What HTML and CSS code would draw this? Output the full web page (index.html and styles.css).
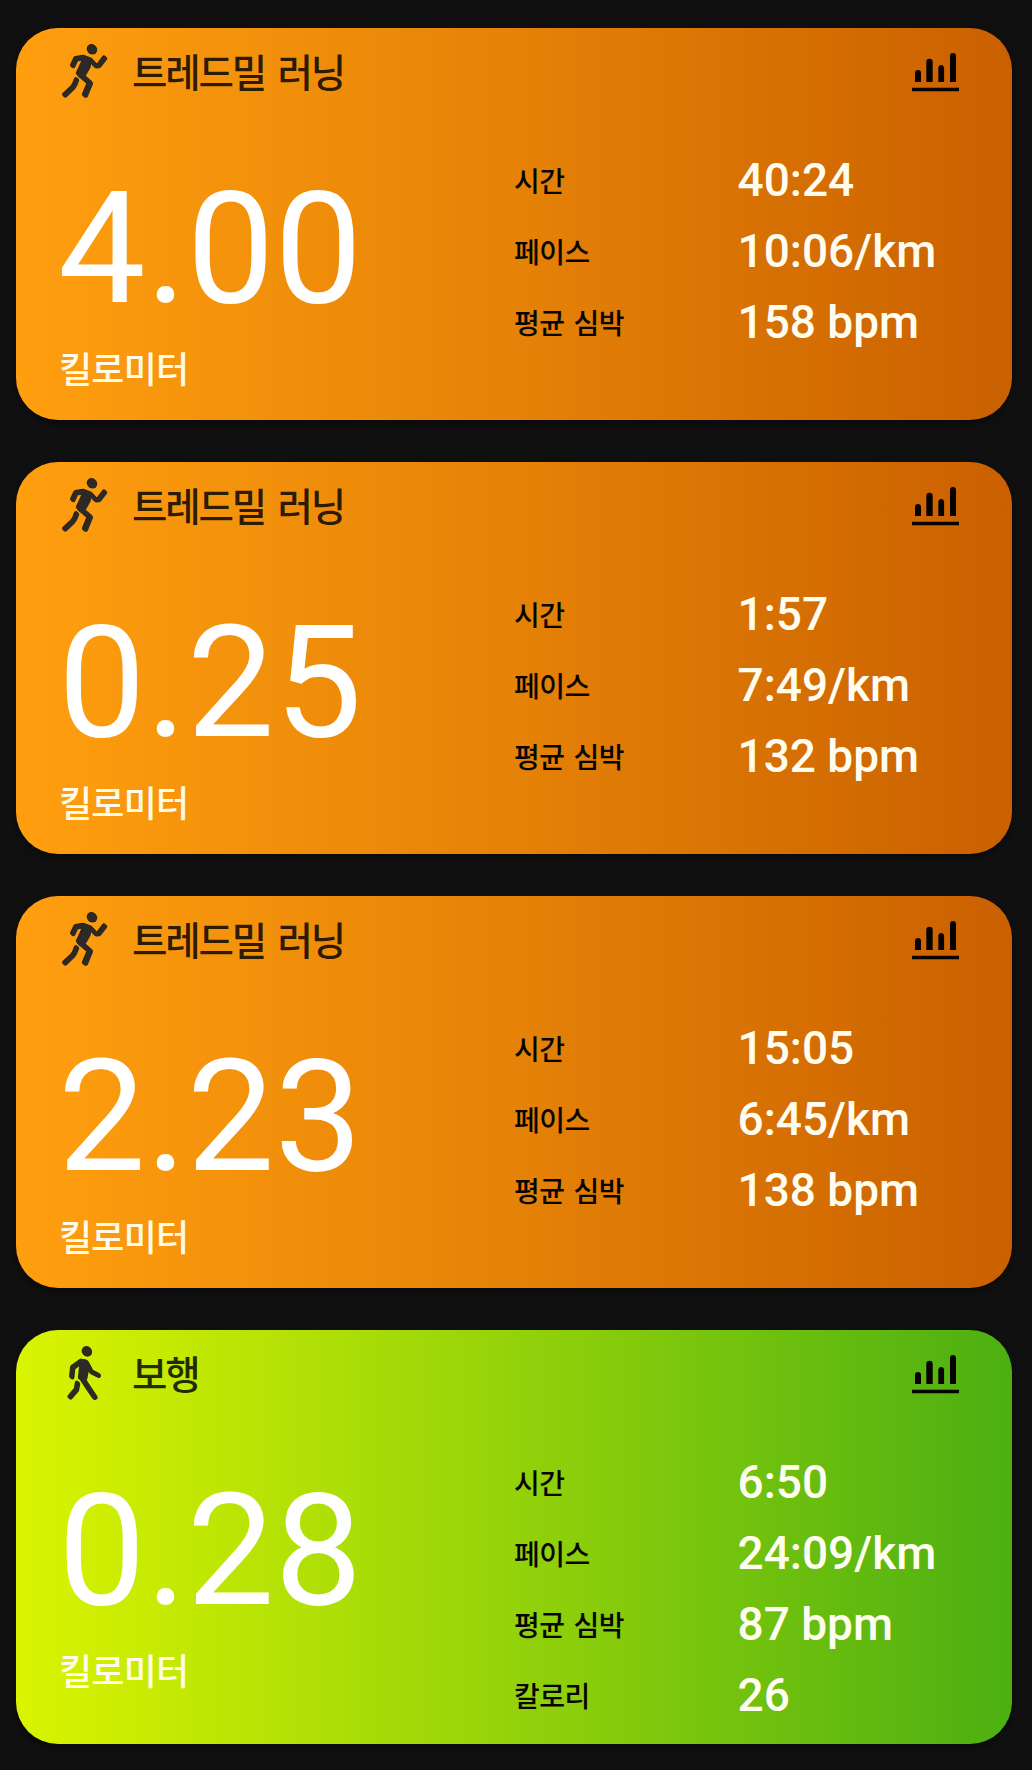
FILE: index.html
```html
<!DOCTYPE html>
<html lang="ko">
<head>
<meta charset="utf-8">
<title>운동 기록</title>
<link rel="stylesheet" href="styles.css">
</head>
<body>
<svg class="defs" width="0" height="0">
  <symbol id="run" viewBox="0 0 50 58">
    <circle cx="32.5" cy="7.8" r="4.8" fill="currentColor"/>
    <path d="M21.5 15L31 18L30 25L25.5 33L20 35L17.5 32L23 20Z" fill="currentColor" stroke="currentColor" stroke-width="1.5" stroke-linejoin="round"/>
    <path d="M13.3 24L16.5 17.2L24.5 16L31 18.5L36.3 24.3L39.3 24L45 16.7" class="limb"/>
    <path d="M20.5 33L30.4 41.5L25.6 53.2" class="limb leg"/>
    <path d="M17 38.3Q15.5 43 13.2 46L5.4 53.4" class="limb"/>
  </symbol>
  <symbol id="walk" viewBox="0 0 50 58">
    <circle cx="27.4" cy="7.9" r="4.8" fill="currentColor"/>
    <path d="M22 16.5L27 17.5L29 22L26.5 35L19.5 35L21 22Z" fill="currentColor" stroke="currentColor" stroke-width="1.5" stroke-linejoin="round"/>
    <path d="M12.3 33.2L13.2 24L21.5 18L27 19L31.8 28.3L38.8 31.8" class="limb"/>
    <path d="M22.5 34.5L28 43L35 53.4" class="limb leg"/>
    <path d="M18 39.8L17 46L10.7 53.4" class="limb"/>
  </symbol>
  <symbol id="chart" viewBox="0 0 48 40">
    <path d="M3 30V21a3 3 0 0 1 6 0V30ZM14.3 30V10a3.2 3.2 0 0 1 6.4 0V30ZM26.3 30V15.3a3 3 0 0 1 5.8 0V30ZM38 30V3.9a3 3 0 0 1 6 0V30ZM0 35.8H47V39.2H0Z" fill="currentColor"/>
  </symbol>
</svg>
<main class="list">
  <article class="card">
    <header class="head"><svg class="sport"><use href="#run"/></svg><h2 class="title">트레드밀 러닝</h2><svg class="chart"><use href="#chart"/></svg></header>
    <div class="body">
      <div class="distance"><div class="num">4.00</div><div class="unit">킬로미터</div></div>
      <dl class="stats"><dt>시간</dt><dd>40:24</dd><dt>페이스</dt><dd>10:06/km</dd><dt>평균 심박</dt><dd>158 bpm</dd></dl>
    </div>
  </article>
  <article class="card">
    <header class="head"><svg class="sport"><use href="#run"/></svg><h2 class="title">트레드밀 러닝</h2><svg class="chart"><use href="#chart"/></svg></header>
    <div class="body">
      <div class="distance"><div class="num">0.25</div><div class="unit">킬로미터</div></div>
      <dl class="stats"><dt>시간</dt><dd>1:57</dd><dt>페이스</dt><dd>7:49/km</dd><dt>평균 심박</dt><dd>132 bpm</dd></dl>
    </div>
  </article>
  <article class="card">
    <header class="head"><svg class="sport"><use href="#run"/></svg><h2 class="title">트레드밀 러닝</h2><svg class="chart"><use href="#chart"/></svg></header>
    <div class="body">
      <div class="distance"><div class="num">2.23</div><div class="unit">킬로미터</div></div>
      <dl class="stats"><dt>시간</dt><dd>15:05</dd><dt>페이스</dt><dd>6:45/km</dd><dt>평균 심박</dt><dd>138 bpm</dd></dl>
    </div>
  </article>
  <article class="card walk">
    <header class="head"><svg class="sport"><use href="#walk"/></svg><h2 class="title">보행</h2><svg class="chart"><use href="#chart"/></svg></header>
    <div class="body">
      <div class="distance"><div class="num">0.28</div><div class="unit">킬로미터</div></div>
      <dl class="stats"><dt>시간</dt><dd>6:50</dd><dt>페이스</dt><dd>24:09/km</dd><dt>평균 심박</dt><dd>87 bpm</dd><dt>칼로리</dt><dd>26</dd></dl>
    </div>
  </article>
</main>
</body>
</html>
```
FILE: styles.css
```css
* { box-sizing: border-box; }
body { margin: 0; background: #101010; font-family: Roboto, "Noto Sans CJK KR", sans-serif; }
.defs { display: block; }
.list { display: flex; flex-direction: column; gap: 42px; padding: 28px 20px 26px 16px; }
.card { height: 392px; border-radius: 42px; background: linear-gradient(90deg, #ff9f0f, #e58207 50%, #ca6000); box-shadow: 0 3px 6px rgba(0, 0, 0, .45); overflow: hidden; }
.card.walk { height: 414px; background: linear-gradient(90deg, #daf400, #94d20a 50%, #4caf12); }
.head { display: flex; align-items: flex-start; height: 84px; padding: 14px 52px 0 44px; }
.sport { width: 50px; height: 58px; color: #2c2a26; filter: drop-shadow(-.7px -.7px 0 rgba(0, 0, 0, .8)); }
.limb { fill: none; stroke: currentColor; stroke-width: 4.4; stroke-linecap: round; stroke-linejoin: round; }
.leg { stroke-width: 5.2; }
.title { margin: 1px 0 0 22px; font-family: "Noto Sans CJK KR", sans-serif; font-size: 38.5px; line-height: 54px; font-weight: 500; letter-spacing: -2.2px; word-spacing: 4px; color: rgba(0, 0, 0, .83); }
.chart { width: 48px; height: 40px; margin: 10px 0 0 auto; color: #080300; }
.body { display: flex; padding-left: 42px; }
.distance { width: 456px; flex: none; }
.num { margin-top: 51px; height: 172px; line-height: 172px; font-size: 156px; color: #fff; }
.unit { margin: 9px 0 0 1px; font-size: 36px; line-height: 54px; font-weight: 500; letter-spacing: -.8px; color: #fffbe8; }
.stats { display: grid; grid-template-columns: 223.5px 1fr; grid-auto-rows: 71px; margin: 32px 0 0; align-items: center; }
.stats dt { font-size: 28px; font-weight: 500; letter-spacing: -.5px; word-spacing: 2.5px; color: #080500; }
.stats dd { margin: 0; font-size: 46px; font-weight: 500; color: #fffdf0; }
```
